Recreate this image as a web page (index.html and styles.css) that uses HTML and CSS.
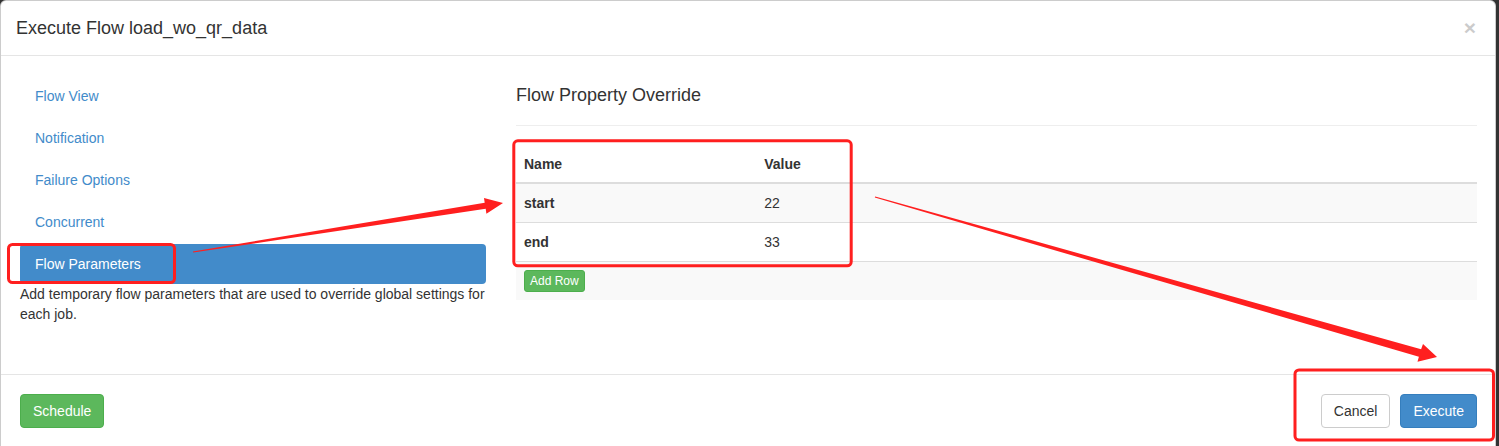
FILE: index.html
```html
<!DOCTYPE html>
<html>
<head>
<meta charset="utf-8">
<link rel="stylesheet" href="styles.css">
</head>
<body>
<div class="modal">
  <div class="modal-header">
    <h4 class="modal-title">Execute Flow load_wo_qr_data</h4>
    <span class="close">×</span>
  </div>
  <div class="modal-body">
    <div class="side">
      <ul class="nav">
        <li><a>Flow View</a></li>
        <li><a>Notification</a></li>
        <li><a>Failure Options</a></li>
        <li><a>Concurrent</a></li>
        <li class="active"><a>Flow Parameters</a></li>
      </ul>
      <p class="help">Add temporary flow parameters that are used to override global settings for each job.</p>
    </div>
    <div class="main">
      <div class="page-header"><h4>Flow Property Override</h4></div>
      <table class="table">
        <thead>
          <tr><th class="c1">Name</th><th>Value</th></tr>
        </thead>
        <tbody>
          <tr class="odd"><td class="key">start</td><td>22</td></tr>
          <tr><td class="key">end</td><td>33</td></tr>
          <tr class="odd"><td colspan="2"><button class="btn-xs">Add Row</button></td></tr>
        </tbody>
      </table>
    </div>
  </div>
  <div class="modal-footer">
    <button class="btn btn-success">Schedule</button>
    <div class="right">
      <button class="btn btn-default">Cancel</button>
      <button class="btn btn-primary">Execute</button>
    </div>
  </div>
</div>
<svg class="annot" width="1499" height="446" viewBox="0 0 1499 446">
  <g fill="none" stroke="#ff1f1f" stroke-width="3">
    <rect x="8.5" y="244.5" width="166" height="38" rx="4"/>
    <rect x="513.8" y="140.8" width="337.4" height="125" rx="4"/>
    <rect x="1295" y="370" width="198.5" height="70" rx="4"/>
  </g>
  <g fill="#ff1f1f">
    <polygon points="193.1,252.6 485.7,208.8 486.4,213.7 503,203 484,197.9 484.7,202.8 192.9,251.4"/>
    <polygon points="875.2,196.4 1421.1,349.2 1423,344 1437,357 1417.5,361.7 1418.9,356.8 874.8,197.6"/>
  </g>
</svg>
</body>
</html>
```

FILE: styles.css
```css
* { box-sizing: border-box; }
html, body { margin: 0; padding: 0; }
body {
  background: #333;
  width: 1499px;
  height: 446px;
  overflow: hidden;
  position: relative;
  font-family: "Liberation Sans", Arial, Helvetica, sans-serif;
  font-size: 14px;
  line-height: 20px;
  color: #333;
}
.modal {
  width: 1496px;
  height: 470px;
  background: #fff;
  border: 1px solid rgba(0,0,0,.2);
  border-radius: 6px;
}
.modal-header {
  display: flex;
  justify-content: space-between;
  align-items: flex-start;
  padding: 15px 15px 15px 15px;
  height: 55px;
  border-bottom: 1px solid #e5e5e5;
}
.modal-title {
  margin: 0;
  font-size: 18px;
  font-weight: normal;
  line-height: 24px;
  color: #333;
}
.close {
  font-size: 21px;
  font-weight: bold;
  line-height: 1;
  color: #000;
  opacity: .2;
  margin-right: 4px;
  margin-top: 1px;
}
.modal-body {
  display: flex;
  gap: 30px;
  padding: 20px 18px 0 19px;
  height: 318px;
}
.side { width: 466px; flex: none; }
.nav { list-style: none; margin: 0; padding: 0; display: flex; flex-direction: column; gap: 2px; }
.nav a {
  display: block;
  padding: 10px 15px;
  color: #428bca;
  border-radius: 4px;
}
.nav .active a { background: #428bca; color: #fff; }
.help { margin: 0; color: #333; }
.main { flex: 1; }
.page-header {
  height: 50px;
  border-bottom: 1px solid #eee;
  margin-bottom: 19px;
  padding-top: 9px;
}
.page-header h4 {
  margin: 0;
  font-size: 18px;
  font-weight: normal;
  line-height: 20px;
  color: #333;
}
.table { width: 100%; border-collapse: collapse; }
.table th {
  text-align: left;
  font-weight: bold;
  padding: 9px 8px 8px;
  line-height: 20px;
  border-bottom: 2px solid #ddd;
}
.table th.c1 { width: 25%; }
.table td {
  padding: 8px;
  line-height: 22px;
  border-top: 1px solid #ddd;
}
.table td.key { font-weight: bold; }
.table tr.odd td { background: #f9f9f9; }
.btn-xs {
  font-family: inherit;
  font-size: 12px;
  line-height: 18px;
  padding: 1px 5px;
  color: #fff;
  background: #5cb85c;
  border: 1px solid #4cae4c;
  border-radius: 3px;
  vertical-align: top;
}
.modal-footer {
  display: flex;
  justify-content: space-between;
  padding: 19px 18px 20px 19px;
  border-top: 1px solid #e5e5e5;
}
.right { display: flex; gap: 10px; }
.btn {
  font-family: inherit;
  font-size: 14px;
  line-height: 20px;
  padding: 6px 12px;
  border: 1px solid transparent;
  border-radius: 4px;
  height: 34px;
}
.btn-success { background: #5cb85c; border-color: #4cae4c; color: #fff; }
.btn-default { background: #fff; border-color: #ccc; color: #333; }
.btn-primary { background: #428bca; border-color: #357ebd; color: #fff; }
.annot { position: absolute; left: 0; top: 0; pointer-events: none; }
```
